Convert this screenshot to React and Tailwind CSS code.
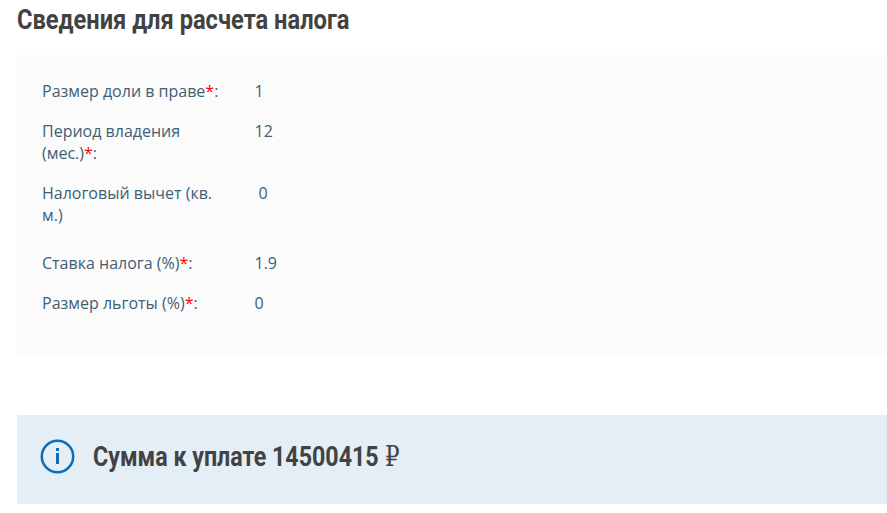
const labelCls = 'w-[212.5px] shrink-0 pr-6'

function Req() {
  return <span className="text-[#f00]">*</span>
}

function Row({ label, required, value, className = 'mb-[18px]', valueClass = '' }) {
  return (
    <div className={`flex ${className}`}>
      <div className={labelCls}>
        {label}
        {required && <Req />}
        {required && ':'}
      </div>
      <div className={valueClass}>{value}</div>
    </div>
  )
}

export default function App() {
  return (
    <div className="w-[887px] h-[513px] overflow-hidden bg-white pl-[17px] font-['Open_Sans',sans-serif] text-[16px] leading-[22px] text-[#3f6075]">
      <h2 className="h-[55px] pt-[3px] origin-left scale-x-[0.876] whitespace-nowrap font-['Roboto',sans-serif] text-[27px] leading-[34px] font-bold text-[#424242]">
        Сведения для расчета налога
      </h2>
      <div className="h-[299px] bg-[#fbfbfb] pt-[25px] pl-[25px]">
        <Row label="Размер доли в праве" required value="1" />
        <Row label="Период владения (мес.)" required value="12" />
        <Row label="Налоговый вычет (кв. м.)" value="0" valueClass="pl-1" className="mb-[26px]" />
        <Row label="Ставка налога (%)" required value="1.9" />
        <Row label="Размер льготы (%)" required value="0" />
      </div>
      <div className="mt-[61px] flex h-[89px] items-center bg-[#e3eef7] pl-[23px] pb-[6px]">
        <svg width="35" height="35" viewBox="0 0 35 35" fill="none" className="mr-[18px] shrink-0">
          <circle cx="17.5" cy="17.5" r="15.7" stroke="#0f6cb5" strokeWidth="2.5" />
          <rect x="16" y="14" width="3" height="11" fill="#0f6cb5" />
          <rect x="16" y="9" width="3" height="3" fill="#0f6cb5" />
        </svg>
        <div className="w-[292px] shrink-0 origin-left scale-x-[0.83] whitespace-nowrap font-['Roboto',sans-serif] text-[28px] leading-[36px] font-bold text-[#424242]">
          Сумма к уплате 14500415
        </div>
        <span className="inline-block origin-left scale-x-[0.82] font-['DejaVu_Serif',serif] text-[28px] leading-[36px] text-[#424242]">₽</span>
      </div>
    </div>
  )
}
